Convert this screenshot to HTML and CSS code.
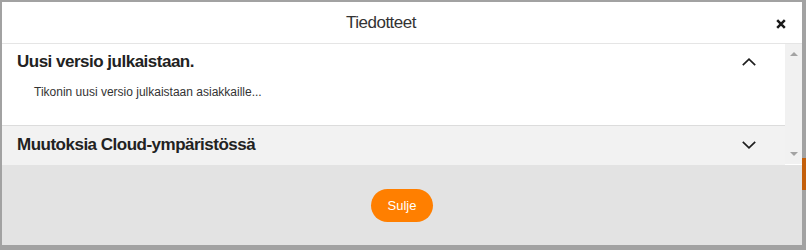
FILE: index.html
```html
<!DOCTYPE html>
<html lang="fi">
<head>
<meta charset="utf-8">
<title>Tiedotteet</title>
<link rel="stylesheet" href="styles.css">
</head>
<body>
<div class="page-tab"></div>
<div class="modal">
  <div class="modal-header">
    <h1 class="modal-title">Tiedotteet</h1>
    <button class="close" aria-label="Sulje">
      <svg width="10" height="10" viewBox="0 0 10 10"><path d="M1.2 1.2 L8.8 8.8 M8.8 1.2 L1.2 8.8" stroke="#1a1a1a" stroke-width="2.5" stroke-linecap="butt" fill="none"/></svg>
    </button>
  </div>
  <div class="modal-body">
    <div class="list">
      <div class="item open">
        <div class="item-head">
          <h2 class="item-title">Uusi versio julkaistaan.</h2>
          <svg class="chev" width="14" height="8" viewBox="0 0 14 8"><polyline points="0.8,7.2 7,1.2 13.2,7.2" fill="none" stroke="#1e1e1e" stroke-width="1.7"/></svg>
        </div>
        <p class="item-text">Tikonin uusi versio julkaistaan asiakkaille...</p>
      </div>
      <div class="item closed">
        <div class="item-head">
          <h2 class="item-title">Muutoksia Cloud-ympäristössä</h2>
          <svg class="chev" width="14" height="8" viewBox="0 0 14 8"><polyline points="0.8,0.8 7,6.8 13.2,0.8" fill="none" stroke="#1e1e1e" stroke-width="1.7"/></svg>
        </div>
      </div>
    </div>
    <div class="scrollbar">
      <span class="arrow up"></span>
      <span class="arrow down"></span>
    </div>
  </div>
  <div class="modal-footer">
    <button class="btn">Sulje</button>
  </div>
</div>
</body>
</html>
```
FILE: styles.css
```css
html, body {
  margin: 0;
  padding: 0;
}
body {
  background: #a2a2a2;
  font-family: "Liberation Sans", Arial, sans-serif;
  width: 806px;
  height: 250px;
  overflow: hidden;
  position: relative;
}
.page-tab {
  position: absolute;
  left: 802px;
  top: 158px;
  width: 6px;
  height: 32px;
  background: #c45f0a;
}
.modal {
  position: relative;
  margin: 2px 0 0 2px;
  width: 800px;
  height: 243px;
  background: #fff;
  display: flex;
  flex-direction: column;
}
.modal-header {
  height: 41px;
  border-bottom: 1px solid #e5e5e5;
  display: flex;
  align-items: center;
}
.modal-title {
  flex: 1;
  text-align: center;
  margin: 0;
  font-size: 17px;
  font-weight: normal;
  letter-spacing: -0.5px;
  color: #333;
  line-height: 20px;
  padding-top: 1px;
}
.close {
  width: 42px;
  height: 41px;
  padding: 0;
  border: 0;
  background: none;
  display: flex;
  align-items: center;
  justify-content: center;
  padding-top: 2px;
}
.modal-body {
  height: 121px;
  display: flex;
}
.list {
  flex: 1;
  display: flex;
  flex-direction: column;
}
.item.open {
  background: #fff;
  border-bottom: 1px solid #dcdcdc;
  box-sizing: border-box;
  height: 82px;
}
.item.closed {
  background: #f2f2f2;
  height: 39px;
}
.item-head {
  display: flex;
  align-items: center;
  justify-content: space-between;
  padding: 8px 29px 0 15px;
}
.item.closed .item-head {
  padding-top: 9px;
}
.item-title {
  margin: 0;
  font-size: 17px;
  line-height: 20px;
  font-weight: bold;
  letter-spacing: -0.5px;
  color: #222;
}
.chev {
  display: block;
}
.item-text {
  margin: 12px 0 0 32px;
  font-size: 12px;
  line-height: 16px;
  color: #333;
}
.scrollbar {
  width: 17px;
  background: #f1f1f1;
  border-bottom: 1px solid #fff;
  box-sizing: border-box;
  display: flex;
  flex-direction: column;
  justify-content: space-between;
  align-items: center;
  padding: 8px 0 8px;
}
.arrow {
  width: 0;
  height: 0;
  border-left: 4px solid transparent;
  border-right: 4px solid transparent;
}
.arrow.up {
  border-bottom: 4px solid #a3a3a3;
}
.arrow.down {
  border-top: 4px solid #a3a3a3;
}
.modal-footer {
  flex: 1;
  background: #e3e3e3;
  display: flex;
  align-items: center;
  justify-content: center;
}
.btn {
  width: 62px;
  height: 33px;
  border: 0;
  border-radius: 17px;
  background: #ff7f00;
  color: #fff;
  font-family: "Liberation Sans", Arial, sans-serif;
  font-size: 13px;
  padding: 0;
  margin-top: 1px;
}
```
